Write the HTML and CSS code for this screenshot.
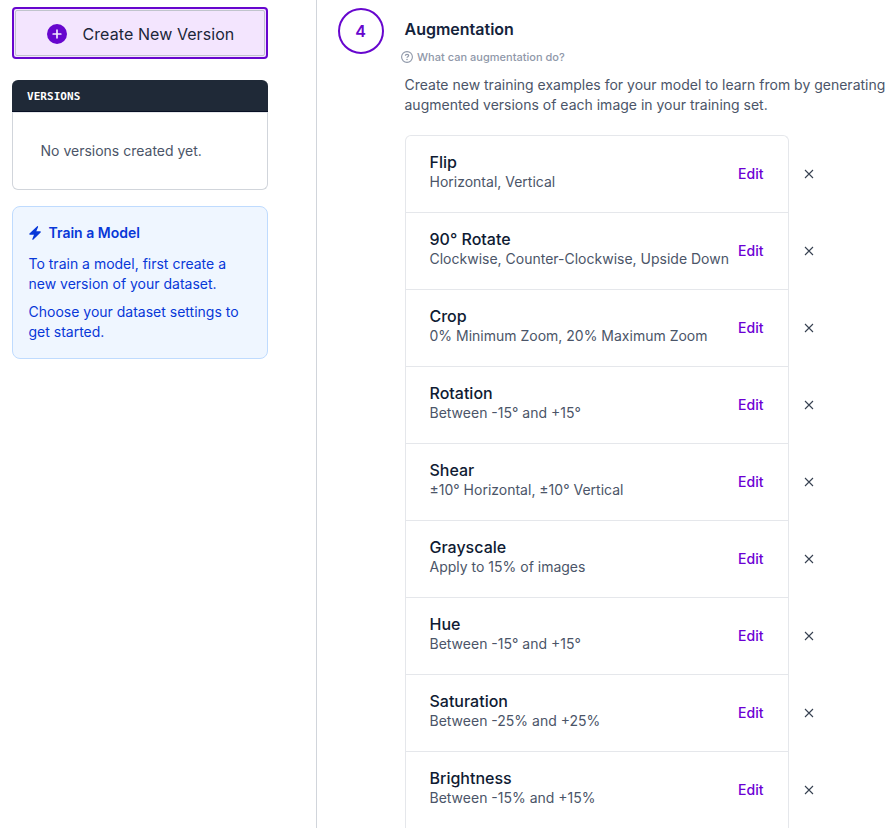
FILE: index.html
```
<!DOCTYPE html>
<html lang="en">
<head>
<meta charset="utf-8">
<title>Augmentation</title>
<link rel="stylesheet" href="styles.css">
</head>
<body>
<svg class="defs" aria-hidden="true">
  <symbol id="close" viewBox="0 0 10 10"><path d="M1 1l8 8M9 1l-8 8" fill="none" stroke="currentColor" stroke-width="1.1"/></symbol>
</svg>
<div class="app">
  <aside class="sidebar">
    <button class="create"><span class="create-inner">
      <svg class="plus" viewBox="0 0 20 20"><circle cx="10" cy="10" r="10" fill="currentColor"/><path d="M10 6.2v7.6M6.2 10h7.6" stroke="#f3e8ff" stroke-width="1.7" stroke-linecap="round"/></svg>
      <span>Create New Version</span></span>
    </button>
    <section class="versions">
      <h2>VERSIONS</h2>
      <p>No versions created yet.</p>
    </section>
    <section class="train">
      <h3><svg class="bolt" viewBox="0 0 12 14"><path d="M8.2.2c.5-.3 1.1.2.9.8L7.300 5.300h3.900c.6 0 .9.7.4 1.100L4.200 13.700c-.5.400-1.200-.1-.9-.7L5 8.700H.9c-.6 0-.9-.7-.4-1.100z" fill="currentColor"/></svg>Train a Model</h3>
      <p>To train a model, first create a new version of your dataset.</p>
      <p>Choose your dataset settings to get started.</p>
    </section>
  </aside>
  <main class="main">
    <div class="step">4</div>
    <div class="content">
      <h1>Augmentation</h1>
      <a class="help"><svg viewBox="0 0 12 12"><circle cx="6" cy="6" r="5.4" fill="none" stroke="currentColor" stroke-width="1.1"/><path d="M4.400 4.700c0-.8.600-1.400 1.600-1.400s1.700.5 1.700 1.300c0 1-1.700 1.100-1.700 2.200" fill="none" stroke="currentColor" stroke-width="1.200"/><circle cx="6" cy="8.500" r=".75" fill="currentColor"/></svg>What can augmentation do?</a>
      <p class="intro">Create new training examples for your model to learn from by generating augmented versions of each image in your training set.</p>
      <ul class="list">
        <li><div class="row"><div><h4>Flip</h4><p>Horizontal, Vertical</p></div><a>Edit</a></div><svg class="x"><use href="#close"/></svg></li>
        <li><div class="row"><div><h4>90° Rotate</h4><p>Clockwise, Counter-Clockwise, Upside Down</p></div><a>Edit</a></div><svg class="x"><use href="#close"/></svg></li>
        <li><div class="row"><div><h4>Crop</h4><p>0% Minimum Zoom, 20% Maximum Zoom</p></div><a>Edit</a></div><svg class="x"><use href="#close"/></svg></li>
        <li><div class="row"><div><h4>Rotation</h4><p>Between -15° and +15°</p></div><a>Edit</a></div><svg class="x"><use href="#close"/></svg></li>
        <li><div class="row"><div><h4>Shear</h4><p>±10° Horizontal, ±10° Vertical</p></div><a>Edit</a></div><svg class="x"><use href="#close"/></svg></li>
        <li><div class="row"><div><h4>Grayscale</h4><p>Apply to 15% of images</p></div><a>Edit</a></div><svg class="x"><use href="#close"/></svg></li>
        <li><div class="row"><div><h4>Hue</h4><p>Between -15° and +15°</p></div><a>Edit</a></div><svg class="x"><use href="#close"/></svg></li>
        <li><div class="row"><div><h4>Saturation</h4><p>Between -25% and +25%</p></div><a>Edit</a></div><svg class="x"><use href="#close"/></svg></li>
        <li><div class="row"><div><h4>Brightness</h4><p>Between -15% and +15%</p></div><a>Edit</a></div><svg class="x"><use href="#close"/></svg></li>
      </ul>
    </div>
  </main>
</div>
</body>
</html>
```
FILE: styles.css
```
* { box-sizing: border-box; margin: 0; padding: 0; }
body { font: 14px/20px Inter, "Liberation Sans", sans-serif; color: #4b5568; background: #fff; overflow: hidden; }
.defs { display: none; }
.app { display: flex; height: 828px; overflow: hidden; }
.sidebar { flex: 0 0 317px; border-right: 1px solid #d1d5db; padding: 7px 48px 0 12px; }
.create { display: block; width: 256px; height: 52px; padding: 1px; border: 2px solid #6706ce; border-radius: 4px; background: #f3e5fe; color: #1b2639; font: 16px/24px Inter, sans-serif; letter-spacing: .08px; }
.create-inner { display: flex; align-items: center; height: 46px; border: 1px solid #c0c4cc; border-radius: 2px; padding-left: 31px; gap: 15.500px; }
.create-inner span { padding-top: 2px; }
.plus { width: 20px; height: 20px; margin-top: 1px; color: #6706ce; }
.versions { height: 110px; margin-top: 21px; }
.versions h2 { height: 32px; padding-left: 15px; border-radius: 6px 6px 0 0; background: #1f2937; color: #fff; font: bold 11px/33px "DejaVu Sans Mono", monospace; letter-spacing: .04px; box-shadow: inset 0 -1px #070f24; }
.versions p { height: 78px; padding: 28px 0 0 27.500px; border: 1px solid #d1d5db; border-top-color: #e5e7eb; border-radius: 0 0 6px 6px; }
.train { height: 153px; margin-top: 16px; padding: 16px 15.500px 0; border: 1px solid #bfdbfe; border-radius: 8px; background: #eff6ff; color: #0838d8; }
.train h3 { display: flex; align-items: center; gap: 8px; font-size: 14px; font-weight: 600; }
.bolt { width: 12px; height: 14px; }
.train p { margin-top: 11px; }
.train p + p { margin-top: 8px; }
.main { flex: 1; display: flex; min-width: 0; }
.step { flex: none; width: 46px; height: 46px; margin: 8px 0 0 21px; border: 2px solid #6706ce; border-radius: 50%; color: #6706ce; font-size: 16px; font-weight: 600; line-height: 42px; text-align: center; padding-right: 1px; }
.content { flex: none; width: 487px; margin-left: 20.500px; padding-top: 17px; }
h1 { color: #14233b; font-size: 16px; font-weight: 600; line-height: 24px; }
.help { display: flex; align-items: center; gap: 4px; margin: 8px 0 0 -3.500px; height: 16px; color: #8f98a9; font-size: 11px; font-weight: 500; letter-spacing: .02px; }
.help svg { width: 12px; height: 12px; }
.intro { margin-top: 10px; }
.list { width: 404px; margin: 20px 0 0 .5px; list-style: none; }
.list li { display: flex; align-items: center; height: 77px; }
.row { flex: none; display: flex; align-items: center; justify-content: space-between; width: 384px; height: 77px; padding: 0 24.500px 0 23.500px; border: 1px solid #e5e7eb; border-bottom: 0; white-space: nowrap; }
.row > div { padding-bottom: 4px; }
.list li:first-child .row { border-radius: 6px 6px 0 0; }
.row h4 { color: #0f1b33; font-size: 16px; font-weight: 500; line-height: 20px; }
.row a { color: #6c00d4; font-weight: 500; }
.x { flex: none; width: 10px; height: 10px; margin-left: 15px; color: #374151; }
```
